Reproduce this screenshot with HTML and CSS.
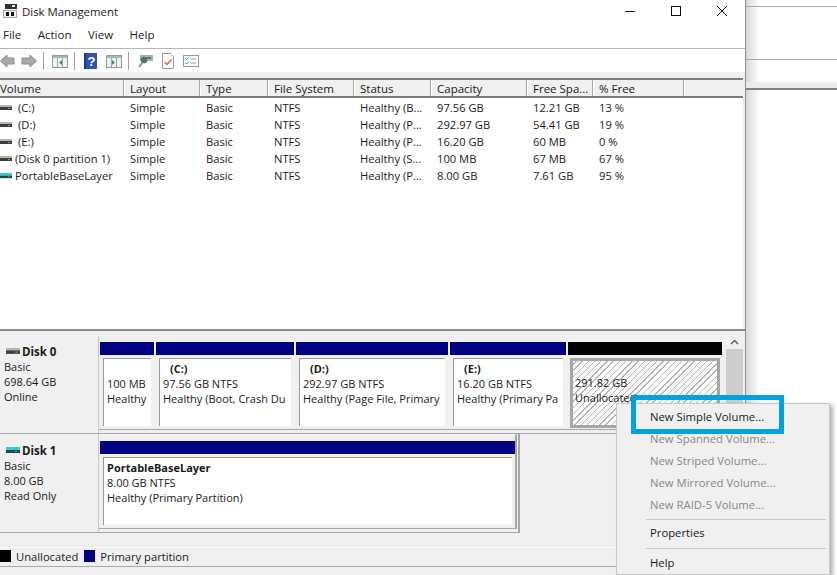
FILE: index.html
```html
<!DOCTYPE html>
<html lang="en">
<head>
  <meta charset="UTF-8" />
  <title>Disk Management</title>
  <link rel="stylesheet" href="styles.css">
</head>
<body>
  <svg class="defs" width="0" height="0">
    <symbol id="drive" viewBox="0 0 12 6">
      <rect x="0" y="0" width="12" height="2" fill="#b4b4b4"/>
      <rect x="0" y="2" width="12" height="3" fill="#3c3c3c"/>
      <rect x="8" y="3" width="2" height="1" fill="#3fd04f"/>
    </symbol>
    <symbol id="drive-usb" viewBox="0 0 14 7">
      <rect x="0" y="0" width="14" height="3" fill="#1fd3de"/>
      <rect x="0" y="3" width="14" height="3" fill="#2b3f44"/>
      <rect x="9" y="4" width="2" height="1" fill="#3fd04f"/>
    </symbol>
    <symbol id="pane" viewBox="0 0 16 13">
      <rect x=".5" y=".5" width="15" height="12" fill="#eef2f2" stroke="#8d9aa0"/>
      <rect x="1" y="1" width="14" height="2" fill="#aab4b8"/>
      <path d="M5.500 3v9M10.500 3v9" stroke="#9aa6aa"/>
    </symbol>
  </svg>

  <div class="window">
    <header class="titlebar">
      <div class="title">
        <svg class="app-icon" width="17" height="14" viewBox="0 0 17 14">
          <rect x="4" y="0" width="12" height="5" fill="#333"/>
          <rect x="11" y="1" width="3" height="2" fill="#dfe8df"/>
          <rect x="2.500" y="6.500" width="13" height="7" fill="#f4f4f4" stroke="#a8a8a8"/>
          <rect x="5" y="8" width="3" height="4" fill="#111"/>
          <rect x="10" y="8" width="3" height="4" fill="#111"/>
        </svg>
        <span>Disk Management</span>
      </div>
      <div class="window-buttons">
        <svg width="12" height="12" viewBox="0 0 12 12"><path d="M1 6.500h10" stroke="#111"/></svg>
        <svg width="12" height="12" viewBox="0 0 12 12"><rect x="1.500" y="1.500" width="9" height="9" fill="none" stroke="#111"/></svg>
        <svg width="12" height="12" viewBox="0 0 12 12"><path d="M1 1l10 10M11 1L1 11" stroke="#111"/></svg>
      </div>
    </header>

    <nav class="menubar">
      <span>File</span>
      <span>Action</span>
      <span>View</span>
      <span>Help</span>
    </nav>

    <div class="toolbar">
      <svg class="tool tool-back" width="15" height="14" viewBox="0 0 15 14"><path d="M.5 7l6.500-6v3h7v6H7v3z" fill="#a9a9a9" stroke="#8a8a8a"/></svg>
      <svg class="tool tool-end" width="16" height="14" viewBox="0 0 16 14"><path d="M15.500 7L9 1v3H1v6h8v3z" fill="#a9a9a9" stroke="#8a8a8a"/></svg>
      <i class="tool-sep"></i>
      <svg class="tool tool-end" width="16" height="13" viewBox="0 0 16 13"><use href="#pane"/><path d="M10 5v5L7 7.500z" fill="#2f9a4a"/></svg>
      <i class="tool-sep"></i>
      <svg class="tool" width="13" height="16" viewBox="0 0 13 16"><rect width="13" height="16" fill="#2f54b0"/><rect width="2" height="16" fill="#1d3a86"/><text x="7.500" y="12.500" class="help-mark">?</text></svg>
      <svg class="tool tool-end" width="16" height="13" viewBox="0 0 16 13"><use href="#pane"/><path d="M6 5v5l3-2.500z" fill="#2f9a4a"/></svg>
      <i class="tool-sep"></i>
      <svg class="tool" width="15" height="14" viewBox="0 0 15 14">
        <rect x="2" y="1" width="13" height="6" fill="#a8b0b2"/>
        <rect x="9" y="3" width="4" height="2" fill="#2f9a4a"/>
        <circle cx="6" cy="6" r="3" fill="#4e7484" stroke="#5d6a70"/>
        <path d="M4 9l-3 4" stroke="#8d8d8d" stroke-width="2"/>
      </svg>
      <svg class="tool" width="12" height="16" viewBox="0 0 12 16">
        <path d="M.5.500h8l3 3v12H.5z" fill="#fff" stroke="#9a9a9a"/>
        <path d="M2.500 9l2.500 2.500 4.500-5" fill="none" stroke="#e0672c" stroke-width="1.500"/>
      </svg>
      <svg class="tool" width="16" height="12" viewBox="0 0 16 12">
        <rect x=".5" y=".5" width="15" height="11" fill="#f7fafb" stroke="#8d9aa0"/>
        <path d="M2.500 3.500l1 1 2-2M2.500 8l1 1 2-2" fill="none" stroke="#3a7fd0"/>
        <path d="M7 4h6M7 8h6" stroke="#9aa6aa"/>
      </svg>
    </div>

    <section class="volume-list">
      <div class="list-row list-head">
        <span>Volume</span><span>Layout</span><span>Type</span><span>File System</span><span>Status</span><span>Capacity</span><span>Free Spa...</span><span>% Free</span><span></span>
      </div>
      <div class="list-row">
        <span class="vol vol-drive"><svg width="12" height="6"><use href="#drive"/></svg>(C:)</span><span>Simple</span><span>Basic</span><span>NTFS</span><span>Healthy (B...</span><span>97.56 GB</span><span>12.21 GB</span><span>13 %</span><span></span>
      </div>
      <div class="list-row">
        <span class="vol vol-drive"><svg width="12" height="6"><use href="#drive"/></svg>(D:)</span><span>Simple</span><span>Basic</span><span>NTFS</span><span>Healthy (P...</span><span>292.97 GB</span><span>54.41 GB</span><span>19 %</span><span></span>
      </div>
      <div class="list-row">
        <span class="vol vol-drive"><svg width="12" height="6"><use href="#drive"/></svg>(E:)</span><span>Simple</span><span>Basic</span><span>NTFS</span><span>Healthy (P...</span><span>16.20 GB</span><span>60 MB</span><span>0 %</span><span></span>
      </div>
      <div class="list-row">
        <span class="vol"><svg width="12" height="6"><use href="#drive"/></svg>(Disk 0 partition 1)</span><span>Simple</span><span>Basic</span><span>NTFS</span><span>Healthy (S...</span><span>100 MB</span><span>67 MB</span><span>67 %</span><span></span>
      </div>
      <div class="list-row">
        <span class="vol"><svg width="12" height="6"><use href="#drive-usb"/></svg>PortableBaseLayer</span><span>Simple</span><span>Basic</span><span>NTFS</span><span>Healthy (P...</span><span>8.00 GB</span><span>7.61 GB</span><span>95 %</span><span></span>
      </div>
    </section>

    <section class="disk-pane">
      <div class="disks">
        <div class="disk disk-0">
          <div class="disk-info">
            <div class="disk-name"><svg width="14" height="7"><use href="#drive"/></svg>Disk 0</div>
            <div>Basic</div>
            <div>698.64 GB</div>
            <div>Online</div>
          </div>
          <div class="partitions">
            <div class="part part-sys">
              <div class="part-bar"></div>
              <div class="part-body part-nolabel"><div>100 MB</div><div>Healthy</div></div>
            </div>
            <div class="part part-c">
              <div class="part-bar"></div>
              <div class="part-body"><b class="drive-letter">(C:)</b><div>97.56 GB NTFS</div><div>Healthy (Boot, Crash Du</div></div>
            </div>
            <div class="part part-d">
              <div class="part-bar"></div>
              <div class="part-body"><b class="drive-letter">(D:)</b><div>292.97 GB NTFS</div><div>Healthy (Page File, Primary</div></div>
            </div>
            <div class="part part-e">
              <div class="part-bar"></div>
              <div class="part-body"><b class="drive-letter">(E:)</b><div>16.20 GB NTFS</div><div>Healthy (Primary Pa</div></div>
            </div>
            <div class="part part-free">
              <div class="part-bar bar-black"></div>
              <div class="part-body part-nolabel hatched"><div>291.82 GB</div><div>Unallocated</div></div>
            </div>
          </div>
        </div>
        <div class="disk disk-1">
          <div class="disk-info">
            <div class="disk-name"><svg width="14" height="7"><use href="#drive-usb"/></svg>Disk 1</div>
            <div>Basic</div>
            <div>8.00 GB</div>
            <div>Read Only</div>
          </div>
          <div class="partitions">
            <div class="part part-usb">
              <div class="part-bar"></div>
              <div class="part-body"><b>PortableBaseLayer</b><div>8.00 GB NTFS</div><div>Healthy (Primary Partition)</div></div>
            </div>
          </div>
        </div>
      </div>
      <div class="scrollbar">
        <svg width="9" height="6" viewBox="0 0 9 6"><path d="M1 5l3.500-3.500L8 5" fill="none" stroke="#606060" stroke-width="1.500"/></svg>
        <div class="scroll-thumb"></div>
      </div>
    </section>

    <footer class="legend">
      <i class="swatch swatch-black"></i><span>Unallocated</span>
      <i class="swatch swatch-blue"></i><span>Primary partition</span>
    </footer>
    <div class="statusbar"></div>
  </div>

  <aside class="behind">
    <div class="behind-top"></div>
    <div class="behind-mid"></div>
    <div class="behind-low"></div>
    <div class="behind-strip"></div>
  </aside>

  <div class="context-menu">
    <div class="menu-item">New Simple Volume...</div>
    <div class="menu-item off">New Spanned Volume...</div>
    <div class="menu-item off">New Striped Volume...</div>
    <div class="menu-item off">New Mirrored Volume...</div>
    <div class="menu-item off">New RAID-5 Volume...</div>
    <hr>
    <div class="menu-item">Properties</div>
    <hr class="sep-last">
    <div class="menu-item">Help</div>
  </div>
  <div class="highlight"></div>
</body>
</html>
```

FILE: styles.css
```css
* { box-sizing: border-box; margin: 0; padding: 0; }
html, body { width: 837px; height: 575px; overflow: hidden; }
body {
  position: relative;
  display: flex;
  font-family: "Open Sans", "Noto Sans", sans-serif;
  font-size: 11.2px;
  color: #1a1a1a;
  background: #fff;
}
.defs { position: absolute; }

.window {
  width: 746px;
  height: 575px;
  display: flex;
  flex-direction: column;
  border-right: 1px solid #8e8e8e;
  background: #fff;
}

/* TITLE + MENU */
.titlebar {
  height: 22px;
  display: flex;
  justify-content: space-between;
  align-items: center;
}
.title { display: flex; align-items: center; gap: 4px; padding-left: 1px; font-size: 11.4px; }
.window-buttons { display: flex; gap: 34px; padding-right: 17px; }

.menubar {
  height: 27px;
  display: flex;
  align-items: center;
  gap: 16.500px;
  padding: 0 0 2px 3px;
  font-size: 11.5px;
  border-bottom: 1px solid #b5b5b5;
}
.toolbar {
  height: 23px;
  display: flex;
  align-items: center;
  padding-top: 1px;
}
.tool { display: block; flex: none; margin-right: 9px; }
.tool-back { margin-right: 6px; }
.tool-end { margin-right: 6px; }
.tool-sep { flex: none; width: 1px; height: 18px; background: #a0a0a0; margin-right: 9px; }
.tool-sep:nth-child(3) { margin-right: 8px; }
.help-mark { font: bold 13px "Liberation Sans", sans-serif; fill: #fff; text-anchor: middle; }

/* VOLUME LIST */
.volume-list {
  height: 259px;
  padding-top: 6px;
  background: linear-gradient(#f0f0f0 6px, #fff 6px);
  border-bottom: 2px solid #8a8a8a;
  box-shadow: inset -2px 0 0 #f0f0f0;
}
.list-row {
  display: grid;
  grid-template-columns: 124px 76px 68px 86px 77px 96px 66px 91px 1fr;
  height: 17px;
  line-height: 17px;
  white-space: nowrap;
}
.list-row span { padding-left: 6px; overflow: hidden; }
.list-row span:nth-child(1) { padding-left: 0; }
.list-head {
  height: 20px;
  line-height: 17px;
  margin: 0 2px 1px 0;
  font-size: 11.5px;
  background: #f0f0f0;
  border-top: 2px solid #7c7c7c;
  border-bottom: 2px solid #7c7c7c;
}
.list-head span { border-right: 1px solid #a8a8a8; box-shadow: 1px 0 0 #fff; }
.list-head span:last-child { border-right: 0; box-shadow: none; }
.vol { display: flex; align-items: center; gap: 3px; }
.vol-drive { gap: 6px; }
.vol svg { flex: none; }

/* DISK PANE */
.disk-pane {
  height: 216px;
  display: flex;
  justify-content: space-between;
  background: #f0f0f0;
  padding-top: 5px;
}
.disks { width: 726px; }
.disk { display: flex; align-items: flex-start; border-bottom: 1px solid #a6a6a6; font-size: 11px; }
.disk-0 { height: 98px; }
.disk-1 { height: 99px; width: 520px; border-right: 2px solid #a6a6a6; }
.disk-info {
  flex: none;
  width: 99px;
  height: 100%;
  padding: 8px 0 0 4px;
  line-height: 15px;
  border-right: 1px solid #c8c8c8;
}
.disk-1 .disk-info { padding-top: 9px; }
.disk-name {
  display: flex;
  align-items: center;
  gap: 2px;
  margin-left: 2px;
  font-weight: 700;
  font-size: 11.5px;
}
.partitions {
  flex: none;
  display: flex;
  gap: 2px;
  height: 94px;
  padding: 6px 0 0 1px;
  border-bottom: 1px solid #a6a6a6;
}
.disk-0 .partitions { width: 627px; }
.disk-1 .partitions {
  width: 418px;
  height: 95px;
  border-top: 1px solid #fafafa;
  border-right: 2px solid #a6a6a6;
}
.part { flex: none; }
.part-sys { width: 54px; }
.part-c { width: 138px; }
.part-d { width: 152px; }
.part-e { width: 116px; }
.part-free { width: 154px; }
.part-usb { width: 415px; }
.part-bar { height: 13px; background: #000080; }
.bar-black { background: #000; }
.part-body {
  height: 68px;
  margin: 3px 3px 0;
  padding: 2px 4px 0 3px;
  background: #fff;
  border-top: 1px solid #9a9a9a;
  border-left: 1px solid #9a9a9a;
  line-height: 15px;
  white-space: nowrap;
}
.part-body div { overflow: hidden; }
.part-nolabel { padding-top: 17px; }
.drive-letter { display: block; padding-left: 7px; }
.hatched {
  margin: 3px 2px 0;
  height: 70px;
  border: 3px solid #a6a6a6;
  padding: 14px 0 0 2px;
  background: repeating-linear-gradient(-45deg, #fff 0 3.400px, #b4b4b4 3.400px 4.400px);
}

.scrollbar {
  width: 17px;
  margin-right: 2px;
  display: flex;
  flex-direction: column;
  align-items: center;
  gap: 4px;
  padding-top: 3px;
}
.scroll-thumb { width: 100%; height: 60px; background: #cdcdcd; }

/* LEGEND */
.legend {
  height: 20px;
  display: flex;
  align-items: center;
  padding-bottom: 2px;
  background: #f0f0f0;
  border-top: 1px solid #fafafa;
  border-bottom: 1px solid #a9a9a9;
}
.swatch { width: 11px; height: 12px; margin-right: 5px; }
.swatch-black { background: #000; }
.swatch-blue { background: #000080; margin-left: 6px; }
.statusbar { flex: 1; background: #f0f0f0; }

/* WINDOW BEHIND */
.behind { flex: 1; background: linear-gradient(90deg, #d8d8d8, #fff 14px); }
.behind-top { height: 7px; border-bottom: 1px solid #a8a8a8; }
.behind-mid { height: 53px; border-bottom: 1px solid #a8a8a8; }
.behind-low { height: 22px; }
.behind-strip { height: 8px; background: #ececec; border-bottom: 2px solid #808080; }

/* CONTEXT MENU */
.context-menu {
  position: absolute;
  left: 616px;
  top: 403px;
  width: 214px;
  height: 172px;
  padding-top: 2px;
  background: #f0f0f0;
  border: 1px solid #c8c8c8;
  box-shadow: 3px 2px 4px rgba(0,0,0,0.3);
  font-size: 11.3px;
}
.menu-item { height: 22px; line-height: 22px; padding-left: 33px; }
.menu-item.off { color: #6d6d6d; opacity: 0.8; }
.context-menu hr { border: 0; border-top: 1px solid #c8c8c8; margin: 3px 3px 2px 29px; }
.context-menu hr.sep-last { margin: 4px 3px 3px 29px; }
.highlight {
  position: absolute;
  left: 631px;
  top: 395px;
  width: 153px;
  height: 39px;
  border: 5px solid #00a2e0;
}
```
